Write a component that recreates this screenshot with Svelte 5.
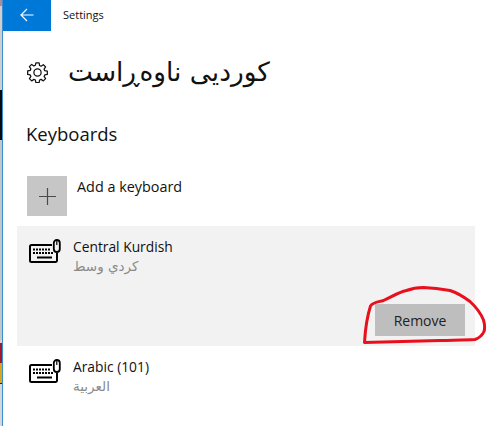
<script>
	const strip = [
		['#b08a9a', 6], ['#cfcdd0', 84], ['#0c0c10', 50], ['#c4c6ca', 200], ['#e9c9cf', 3],
		['#a01a2e', 20], ['#dca51e', 20], ['#222', 1], ['#d4d6da', 42]
	];
</script>

<div class="screen">
	<div class="strip">
		{#each strip as [color, h]}
			<i style="background: {color}; height: {h}px"></i>
		{/each}
	</div>
	<div class="window">
		<header>
			<button class="back" aria-label="Back">
				<svg width="14" height="14" viewBox="0 0 14 14" fill="none" stroke="#fff" stroke-width="1.2">
					<path d="M1 7h12.500M7 1 1 7l6 6" />
				</svg>
			</button>
			<span class="app-title">Settings</span>
		</header>

		<div class="heading">
			<svg class="gear" width="21" height="21" viewBox="0 0 22 22" fill="none" stroke="#111" stroke-width="1.3" stroke-linejoin="round">
				<path d="M9.300 1h3.400l.5 2.700 1.600.7 2.300-1.600 2.400 2.400-1.600 2.300.7 1.600 2.700.5v3.400l-2.700.5-.7 1.600 1.600 2.300-2.400 2.400-2.300-1.600-1.600.7-.5 2.700H9.300l-.5-2.700-1.600-.7-2.300 1.600-2.400-2.400 1.600-2.300-.7-1.600-2.700-.5V9.300l2.700-.5.7-1.600-1.600-2.300 2.400-2.400 2.300 1.600 1.600-.7z" />
				<circle cx="11" cy="11" r="3.800" />
			</svg>
			<h1 dir="rtl">کوردیی ناوەڕاست</h1>
		</div>

		<h2>Keyboards</h2>

		<div class="add">
			<span class="plus">
				<svg width="17" height="17" viewBox="0 0 17 17" stroke="#4a4a4a" stroke-width="1.200">
					<path d="M8.500 0v17M0 8.500h17" />
				</svg>
			</span>
			<span class="add-label">Add a keyboard</span>
		</div>

		<div class="kb selected">
			<div class="kb-row">
				{@render keyboard()}
				<div>
					<div class="name">Central Kurdish</div>
					<div class="native" dir="rtl">كردي وسط</div>
				</div>
			</div>
			<div class="actions">
				<button class="remove">Remove</button>
			</div>
			<svg class="scribble" width="124" height="60" viewBox="0 0 124 60" fill="none" stroke="#e8101c" stroke-width="3" stroke-linecap="round" stroke-linejoin="round">
				<path d="M1.500 56.500C2 48 3 34 7.500 20 10 16 15 16 20.500 14.500 30 10 36 6 43.500 4.500 50 2 55 1.500 60.500 1.500 70 2 78 3 87 4.500 95 7 101 11 107 15.500 113 21 118 28 120.500 34 122 39 122 42 121 45.500 119 50 116 52 112 53.500 100 54 90 54.500 77 54.500Z" />
			</svg>
		</div>

		<div class="kb last">
			<div class="kb-row">
				{@render keyboard()}
				<div>
					<div class="name">Arabic (101)</div>
					<div class="native" dir="rtl">العربية</div>
				</div>
			</div>
		</div>
	</div>
</div>

{#snippet keyboard()}
	<svg class="kb-icon" width="32" height="24" viewBox="0 0 32 24" fill="none" stroke="#000">
		<path stroke-width="2" d="M23 6H2.500A1.500 1.500 0 0 0 1 7.500v14A1.500 1.500 0 0 0 2.500 23h24a1.500 1.500 0 0 0 1.500-1.500V14" />
		<rect x="24.800" y="1" width="6" height="12" rx="3" stroke-width="1.800" />
		<path d="M27.800 1v5" stroke-width="1.200" />
		<path stroke-width="2" stroke-dasharray="2 1" d="M4 10.500h18M4 14h21" />
		<path stroke-width="2" d="M8 18.500h15" />
	</svg>
{/snippet}

<style>
	:global(body) {
		margin: 0;
		background: #fff;
		overflow: hidden;
	}

	.screen {
		display: flex;
		width: 487px;
		height: 426px;
		overflow: hidden;
		font-family: 'Open Sans', 'DejaVu Sans', sans-serif;
		color: #111;
	}

	.strip {
		width: 2px;
		flex: none;
		display: flex;
		flex-direction: column;
	}

	.strip i {
		display: block;
		flex: none;
	}

	.window {
		flex: 1;
		min-width: 0;
		border-left: 1px solid #3a8fd0;
		background: #fff;
	}

	header {
		display: flex;
		align-items: center;
		height: 31px;
	}

	.back {
		width: 48px;
		height: 31px;
		padding: 0 0 2px 0;
		border: none;
		background: #0078d7;
		display: flex;
		align-items: center;
		justify-content: center;
	}

	.app-title {
		margin-left: 12px;
		font-size: 11px;
		margin-top: -2px;
	}

	.heading {
		display: flex;
		align-items: center;
		height: 44px;
		margin-top: 19px;
		padding-left: 24px;
	}

	h1 {
		margin: 0 0 0 20px;
		font-family: 'DejaVu Sans', sans-serif;
		font-size: 26.400px;
		font-weight: 400;
		line-height: 44px;
	}

	h2 {
		margin: 27px 0 0 23px;
		font-size: 18.500px;
		font-weight: 400;
		line-height: 26px;
	}

	.add {
		display: flex;
		margin: 29px 0 0 24px;
		gap: 10px;
	}

	.plus {
		width: 40px;
		height: 40px;
		background: #c6c6c6;
		display: flex;
		align-items: center;
		justify-content: center;
	}

	.add-label {
		font-size: 14.400px;
		line-height: 20px;
		margin-top: 1px;
	}

	.kb {
		width: 458px;
		margin-left: 14px;
		padding-left: 12px;
		box-sizing: border-box;
		position: relative;
	}

	.selected {
		margin-top: 10px;
		height: 120px;
		background: #f2f2f2;
		padding-top: 11px;
	}

	.last {
		padding-top: 11px;
	}

	.kb-row {
		display: flex;
		gap: 12px;
	}

	.kb-icon {
		margin-top: 2px;
		flex: none;
	}

	.name {
		font-size: 13.800px;
		line-height: 19px;
	}

	.native {
		font-family: 'DejaVu Sans', sans-serif;
		font-size: 13.500px;
		line-height: 21px;
		color: #8a8a8a;
		width: fit-content;
	}

	.actions {
		display: flex;
		justify-content: flex-end;
		margin-top: 27px;
		padding-right: 10px;
	}

	.remove {
		width: 90px;
		height: 32px;
		border: none;
		background: #bebebe;
		color: #222;
		font: inherit;
		font-size: 14px;
	}

	.scribble {
		position: absolute;
		left: 346px;
		top: 60px;
	}
</style>
